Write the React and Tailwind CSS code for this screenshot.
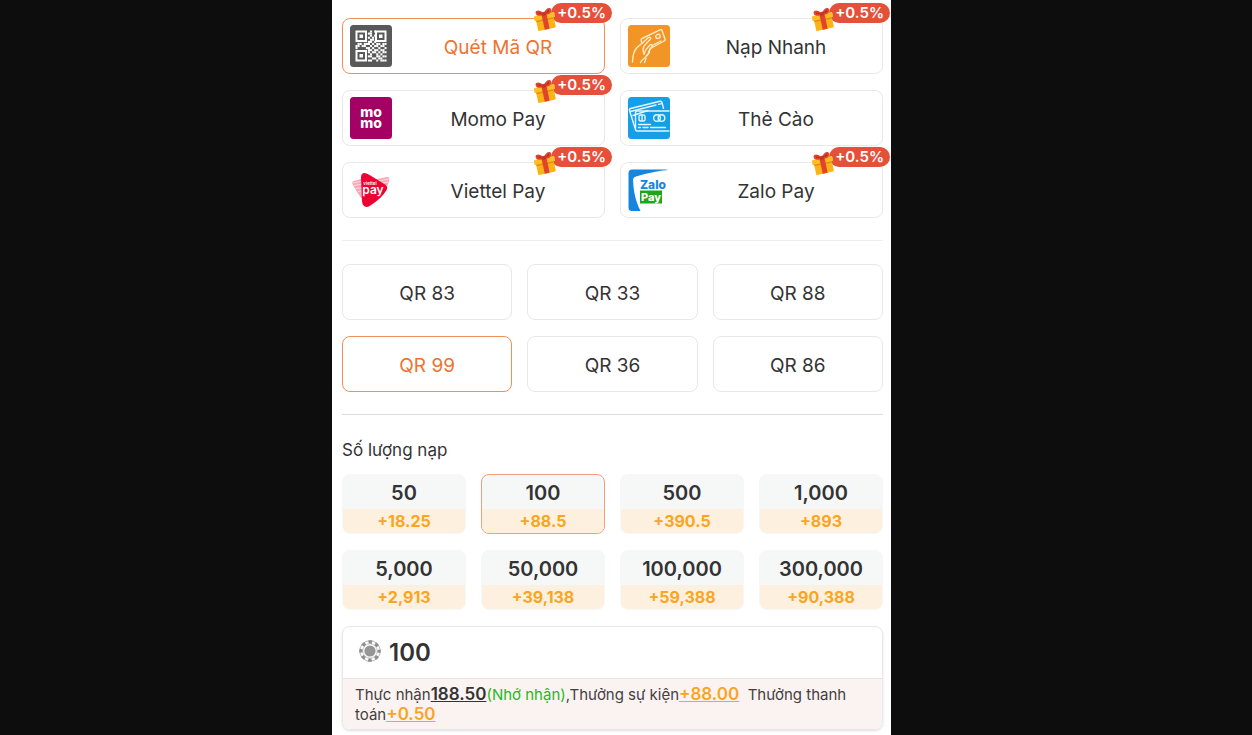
import React, { useState } from "react";

// data modules between the three finder squares
const QR_ROWS = [
  "000000010100000",
  "000000110000000",
  "000000010100000",
  "000000101000000",
  "000000011000000",
  "000000110100000",
  "011011101011011",
  "110110010110110",
  "100001101001001",
  "000000110110110",
  "000000101101011",
  "000000010010100",
  "000000110011011",
  "000000001101100",
  "000000110010111",
];

const QR_FINDERS = [
  [5.5, 5.5],
  [25, 5.5],
  [5.5, 25],
];

const QrIcon = () => (
  <svg viewBox="0 0 42 42" className="size-[42px]" aria-hidden="true">
    <rect width="42" height="42" rx="3.5" fill="#59595a" />
    {QR_FINDERS.map(([x, y]) => (
      <g key={`${x}-${y}`}>
        <rect
          x={x + 1}
          y={y + 1}
          width="9.5"
          height="9.5"
          fill="none"
          stroke="#fff"
          strokeWidth="2"
        />
        <rect x={x + 4} y={y + 4} width="3.5" height="3.5" fill="#fff" />
      </g>
    ))}
    <g transform="translate(5.5 5.5) scale(2.07)" fill="#fff">
      {QR_ROWS.map((row, y) =>
        row
          .split("")
          .map((cell, x) =>
            cell === "1" ? (
              <rect key={`${x}-${y}`} x={x} y={y} width="1" height="1" />
            ) : null
          )
      )}
    </g>
  </svg>
);

const HandCardIcon = () => (
  <svg viewBox="0 0 42 42" className="size-[42px]" aria-hidden="true">
    <rect width="42" height="42" rx="3.5" fill="#f19527" />
    <g
      fill="none"
      stroke="#ffe9c4"
      strokeWidth="1.4"
      strokeLinecap="round"
      strokeLinejoin="round"
    >
      <path d="M14 13.5 32 4.8q1.4-.6 2 .7L37 14q.4 1.4-.9 2L21.5 24" />
      <path d="M14 13.5q-1.4.8-.8 2.2l.9 2.3" />
      <ellipse cx="30" cy="11.4" rx="2.3" ry="1.9" transform="rotate(-25 30 11.4)" />
      <path d="M24.5 20.3 33 16" />
      <path d="M4.5 37c.2-6 1.2-11 4.5-14.5L15.5 17l5-4.5c1.5-1 3 .3 1.8 1.8L16 21c-1.5 3-1 5.5 0 8" />
      <path d="M16 29 18 24.5l4-4.5c1.3-1.3 3 0 2 1.5L20.5 27M18 31l3.5-3.5" />
      <path d="M12.5 37.5c1-3.5 5.5-4.5 7.5-8l1.5-3.5M18 33.5l-1.5 4" />
    </g>
  </svg>
);

const MomoIcon = () => (
  <svg viewBox="0 0 42 42" className="size-[42px]" aria-hidden="true">
    <rect width="42" height="42" rx="3.5" fill="#a50064" />
    <g
      fill="#fff"
      fontFamily="Inter, sans-serif"
      fontWeight="800"
      fontSize="14"
      textAnchor="middle"
    >
      <text x="21" y="19.5">mo</text>
      <text x="21" y="30.5">mo</text>
    </g>
  </svg>
);

const CardsIcon = () => (
  <svg viewBox="0 0 42 42" className="size-[42px]" aria-hidden="true">
    <rect width="42" height="42" rx="3.5" fill="#159fe8" />
    <g
      fill="none"
      stroke="#e4f6ff"
      strokeWidth="1.4"
      strokeLinecap="round"
      strokeLinejoin="round"
    >
      <path d="M7 31 1.5 13.5q-.5-1.5 1-2L32 4.3q1.6-.4 2 1.1l1.5 6" />
      <path d="M2.5 14.5 28 8M30.5 7.4l3.3-.8" />
      <path d="M5 18.5 20 13.5" />
      <path d="M7.5 15.5Q7.5 14 9 14H41M7.5 15.5v17q0 1.5 1.5 1.5H41" />
      <rect x="11" y="18" width="6" height="6" rx="1.5" />
      <path d="M14 18.5v5" />
      <circle cx="29" cy="21" r="3.3" />
      <circle cx="33.5" cy="21" r="3.3" />
      <path d="M10.5 27.5h12M10.5 30.5h2M15 30.5h5M22.5 30.5h15" />
    </g>
  </svg>
);

const ViettelIcon = () => (
  <svg viewBox="0 0 42 42" className="size-[42px]" aria-hidden="true">
    <path d="M2.5 15q-1-2.5 1.5-3L13 9.5V31Q9 27 2.5 15z" fill="#fba6b3" />
    <path d="M25 10.5l12-2.5q2.5-.3 2.5 2-.5 4-5 13z" fill="#fba6b3" />
    <path
      d="M3 14l10-2M4 16.5l9-1.5M6 19.5l8-1M8 22.5l6-1M28 12l11-2M30 14.5l8-1.5M33 17l4-.5"
      stroke="#fff"
      strokeWidth=".6"
    />
    <path
      d="M11 8.5Q11.2 3.5 15.5 4.2q2 .6 4.5 2L35 15.5q3.5 2.5 1.3 6Q31.5 29.5 20 36.8q-4 2.5-6.5-.3-1.3-1.5-1.5-4.5Z"
      fill="#ee0033"
    />
    <g fill="#fff" fontFamily="Inter, sans-serif" textAnchor="middle">
      <text x="20" y="16" fontSize="4.5" fontWeight="600">viettel</text>
      <text x="23" y="25" fontSize="12" fontWeight="600">pay</text>
    </g>
  </svg>
);

const ZaloIcon = () => (
  <svg viewBox="0 0 42 42" className="size-[42px]" aria-hidden="true">
    <rect width="42" height="42" rx="3.5" fill="#fff" />
    <path
      d="M4 .5H38L40 1Q26 2 8 7.5q-3 1-3 3.5C5.5 22 7.5 32 12.5 42H4Q.5 42 .5 38.5V4Q.5.5 4 .5Z"
      fill="#1685df"
    />
    <rect x="12" y="21.5" width="22" height="13" fill="#1da51c" />
    <g fontFamily="Inter, sans-serif" fontWeight="800" textAnchor="middle">
      <text x="25" y="19.5" fontSize="12" fill="#1685df">Zalo</text>
      <text x="23" y="31.5" fontSize="11" fill="#fff">Pay</text>
    </g>
  </svg>
);

const GiftIcon = () => (
  <svg viewBox="0 0 24 24" className="z-10 mt-1 -mr-1.5 size-6" aria-hidden="true">
    <g transform="rotate(-12 12 12)">
      <path d="M3 11h18v10.5q0 1-1 1H4q-1 0-1-1z" fill="#fbb416" />
      <path d="M3 11h18v2.5H3z" fill="#e98a10" />
      <rect x="1.5" y="7" width="21" height="5" rx=".8" fill="#fdbd24" />
      <path d="M9.5 7h5v15.5h-5z" fill="#e2432c" />
      <path
        d="M12 7.5C9 8.5 4 8 4 4.5 4 1 9 1 12 6.5 15 1 20 1 20 4.5 20 8 15 8.5 12 7.5z"
        fill="#e2432c"
      />
      <path
        d="M10 6.2Q7.5 3.5 6.2 4.5 6 6.3 10 6.2zM14 6.2q2.5-2.7 3.8-1.7.2 1.8-3.8 1.7z"
        fill="#b52a1c"
      />
      <rect x="10" y="4.8" width="4" height="3.6" rx="1" fill="#c93322" />
    </g>
  </svg>
);

const ChipIcon = () => (
  <svg viewBox="0 0 22 22" className="mb-1 size-[22px]" aria-hidden="true">
    <circle cx="11" cy="11" r="10.3" fill="#fff" stroke="#9a9a9a" strokeWidth=".7" />
    <circle
      cx="11"
      cy="11"
      r="9"
      fill="none"
      stroke="#8f8f8f"
      strokeWidth="3.4"
      strokeDasharray="3.534 3.534"
      strokeDashoffset="1.767"
    />
    <circle cx="11" cy="11" r="7.2" fill="#fff" stroke="#a3a3a3" strokeWidth=".6" />
    <circle cx="11" cy="11" r="5.6" fill="#969696" />
  </svg>
);

const METHODS = [
  { name: "Quét Mã QR", icon: QrIcon, bonus: "+0.5%" },
  { name: "Nạp Nhanh", icon: HandCardIcon, bonus: "+0.5%" },
  { name: "Momo Pay", icon: MomoIcon, bonus: "+0.5%" },
  { name: "Thẻ Cào", icon: CardsIcon },
  { name: "Viettel Pay", icon: ViettelIcon, bonus: "+0.5%" },
  { name: "Zalo Pay", icon: ZaloIcon, bonus: "+0.5%" },
];

const CHANNELS = ["QR 83", "QR 33", "QR 88", "QR 99", "QR 36", "QR 86"];

const AMOUNTS = [
  { value: "50", bonus: "+18.25" },
  { value: "100", bonus: "+88.5" },
  { value: "500", bonus: "+390.5" },
  { value: "1,000", bonus: "+893" },
  { value: "5,000", bonus: "+2,913" },
  { value: "50,000", bonus: "+39,138" },
  { value: "100,000", bonus: "+59,388" },
  { value: "300,000", bonus: "+90,388" },
];

const App = () => {
  const [method, setMethod] = useState("Quét Mã QR");
  const [channel, setChannel] = useState("QR 99");
  const [amount, setAmount] = useState("100");

  return (
    <div className="min-h-screen grid grid-cols-[332fr_559fr_361fr] bg-[#0d0d0d] font-['Inter',sans-serif] text-[#333]">
      <main className="col-start-2 bg-white pl-2.5 pr-2 pt-[18px] pb-1">
        {/* Payment methods */}
        <div className="grid grid-cols-2 gap-x-[15px] gap-y-4">
          {METHODS.map(({ name, icon: Icon, bonus }) => (
            <button
              key={name}
              type="button"
              aria-pressed={method === name}
              onClick={() => setMethod(name)}
              className={`relative flex h-14 items-center rounded-lg border pl-[7px] text-[19px] ${
                method === name
                  ? "border-[#f09058] text-[#ee7331]"
                  : "border-[#e8e8ea]"
              }`}
            >
              <Icon />
              <span className="flex-1 pt-1 text-center">{name}</span>
              {bonus && (
                <span className="absolute -right-2 -top-4 flex items-start">
                  <GiftIcon />
                  <span className="h-5 rounded-full bg-[#e5503a] px-1.5 text-[15px] leading-5 font-semibold text-white">
                    {bonus}
                  </span>
                </span>
              )}
            </button>
          ))}
        </div>

        <hr className="mt-[22px] mb-[23px] border-[#eee]" />

        {/* QR channels */}
        <div className="grid grid-cols-3 gap-x-[15px] gap-y-4">
          {CHANNELS.map((name) => (
            <button
              key={name}
              type="button"
              aria-pressed={channel === name}
              onClick={() => setChannel(name)}
              className={`h-14 rounded-lg border pt-1 text-[19px] ${
                channel === name
                  ? "border-[#f09058] text-[#ee7331]"
                  : "border-[#e8e8ea]"
              }`}
            >
              {name}
            </button>
          ))}
        </div>

        <hr className="mt-[22px] mb-[23px] border-[#ddd]" />

        <label htmlFor="amount" className="block text-[17px] leading-6">
          Số lượng nạp
        </label>

        {/* Preset amounts */}
        <div className="mt-3 grid grid-cols-4 gap-x-[15px] gap-y-4">
          {AMOUNTS.map((item) => (
            <button
              key={item.value}
              type="button"
              aria-pressed={amount === item.value}
              onClick={() => setAmount(item.value)}
              className={`flex h-[60px] flex-col overflow-hidden rounded-lg border bg-[#f6f8f8] ${
                amount === item.value ? "border-[#e9a27c]" : "border-transparent"
              }`}
            >
              <span className="w-full flex-1 pt-0.5 text-xl leading-8 font-semibold">
                {item.value}
              </span>
              <span className="h-6 w-full bg-[#fdf0df] text-base leading-6 font-bold text-[#f9a51f]">
                {item.bonus}
              </span>
            </button>
          ))}
        </div>

        {/* Entered amount and what will be received */}
        <div className="mt-4 overflow-hidden rounded-lg border border-[#e8e8ea] shadow">
          <div className="flex h-[51px] items-center gap-2 px-4">
            <ChipIcon />
            <input
              id="amount"
              type="text"
              value={amount}
              onChange={(e) => setAmount(e.target.value)}
              className="min-w-0 flex-1 bg-transparent text-2xl font-semibold outline-none"
            />
          </div>
          <p className="border-t border-[#e9e1e2] bg-[#fbf3f2] px-3 pt-1.5 pb-1 text-[15px] leading-5 text-[#443e3e]">
            Thực nhận
            <b className="text-[17px] leading-none font-semibold text-[#333] underline">188.50</b>
            <span className="text-[#27b81f]">(Nhớ nhận)</span>,Thưởng sự kiện
            <b className="text-[17px] leading-none font-semibold text-[#f9a51f] underline">+88.00</b>
            &nbsp; Thưởng thanh toán
            <b className="text-[17px] leading-none font-semibold text-[#f9a51f] underline">+0.50</b>
          </p>
        </div>
      </main>
    </div>
  );
};

export default App;
